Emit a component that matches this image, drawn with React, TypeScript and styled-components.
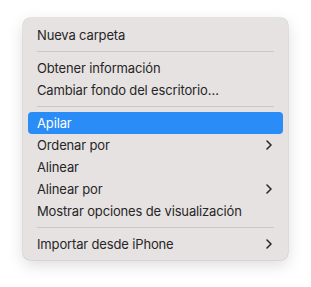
import styled, { createGlobalStyle } from "styled-components";

type Entry =
  | { kind: "item"; label: string; submenu?: boolean; active?: boolean }
  | { kind: "separator" };

const entries: Entry[] = [
  { kind: "item", label: "Nueva carpeta" },
  { kind: "separator" },
  { kind: "item", label: "Obtener información" },
  { kind: "item", label: "Cambiar fondo del escritorio…" },
  { kind: "separator" },
  { kind: "item", label: "Apilar", active: true },
  { kind: "item", label: "Ordenar por", submenu: true },
  { kind: "item", label: "Alinear" },
  { kind: "item", label: "Alinear por", submenu: true },
  { kind: "item", label: "Mostrar opciones de visualización" },
  { kind: "separator" },
  { kind: "item", label: "Importar desde iPhone", submenu: true },
];

const Chevron: React.FC = () => (
  <svg width="6" height="10" viewBox="0 0 6 10" fill="none">
    <path
      d="M1 1l4 4-4 4"
      stroke="currentColor"
      strokeWidth="1.6"
      strokeLinecap="round"
      strokeLinejoin="round"
    />
  </svg>
);

const App: React.FC = () => {
  return (
    <>
      <GlobalStyle />
      <Page>
        <Menu>
          {entries.map((e, i) =>
            e.kind === "separator" ? (
              <Separator key={i} />
            ) : (
              <Item key={i} $active={e.active}>
                <span>{e.label}</span>
                {e.submenu && (
                  <Arrow>
                    <Chevron />
                  </Arrow>
                )}
              </Item>
            )
          )}
        </Menu>
      </Page>
    </>
  );
};

const GlobalStyle = createGlobalStyle`
  html, body {
    margin: 0;
    padding: 0;
    background: #ffffff;
  }
  body {
    font-family: Inter, "Noto Sans", sans-serif;
    -webkit-font-smoothing: antialiased;
  }
`;

const Page = styled.div`
  width: 311px;
  height: 287px;
  padding: 18px 0 0 23px;
  box-sizing: border-box;
`;

const Menu = styled.div`
  width: 265px;
  box-sizing: border-box;
  padding: 6px 5px 5px;
  background: #e6e2e2;
  border-radius: 7px;
  box-shadow: 0 0 0 0.5px rgba(0, 0, 0, 0.16), 0 5px 16px rgba(0, 0, 0, 0.14);
  display: flex;
  flex-direction: column;
`;

const Item = styled.div<{ $active?: boolean }>`
  height: 22px;
  display: flex;
  align-items: center;
  justify-content: space-between;
  padding: 0 11px 0 9px;
  border-radius: 4px;
  font-size: 13px;
  letter-spacing: -0.15px;
  color: ${(p) => (p.$active ? "#ffffff" : "#262626")};
  background: ${(p) => (p.$active ? "#2a8cf6" : "transparent")};
`;

const Arrow = styled.span`
  display: flex;
  align-items: center;
  color: #2b2b2b;
`;

const Separator = styled.div`
  height: 1px;
  margin: 5px 9px;
  background: #cbc7c7;
`;

export default App;
